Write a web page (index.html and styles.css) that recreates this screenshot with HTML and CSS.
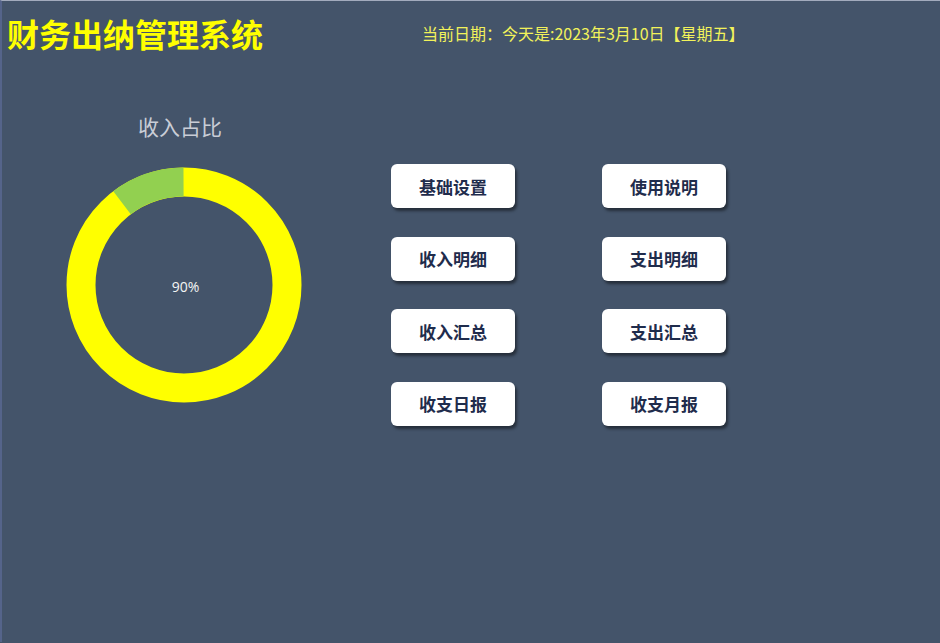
FILE: index.html
```html
<!DOCTYPE html>
<html lang="zh-CN">

<head>
    <meta charset="utf-8">
    <title>财务出纳管理系统</title>
    <link rel="stylesheet" href="styles.css">
</head>

<body>
    <div class="page">
        <div class="header">
            <h1 class="title">财务出纳管理系统</h1>
            <div class="date">当前日期：今天是:2023年3月10日【星期五】</div>
        </div>

        <div class="main">
            <div class="chart">
                <div class="chart-title">收入占比</div>
                <div class="donut">
                    <svg width="240" height="240" viewBox="0 0 240 240">
                        <circle cx="120" cy="120" r="103" fill="none" stroke="#ffff00" stroke-width="29"></circle>
                        <!-- 支出部分 10% -->
                        <circle cx="120" cy="120" r="103" fill="none" stroke="#92d050" stroke-width="29"
                            stroke-dasharray="66 600" transform="rotate(-127 120 120)"></circle>
                    </svg>
                    <span class="donut-label">90%</span>
                </div>
            </div>

            <div class="menu">
                <button class="menu-btn">基础设置</button>
                <button class="menu-btn">使用说明</button>
                <button class="menu-btn">收入明细</button>
                <button class="menu-btn">支出明细</button>
                <button class="menu-btn">收入汇总</button>
                <button class="menu-btn">支出汇总</button>
                <button class="menu-btn">收支日报</button>
                <button class="menu-btn">收支月报</button>
            </div>
        </div>
    </div>
</body>

</html>
```

FILE: styles.css
```css
:root {
    --bg-color: #44546a;
    --title-color: #ffff00;
    --btn-text: #1f2c4c;
}

body {
    margin: 0;
    font-family: "Noto Sans CJK SC", "Noto Sans", sans-serif;
    background: var(--bg-color);
}

.page {
    height: 642px;
    border-top: 1px solid #a3abbd;
    border-left: 2px solid #55648a;
    box-sizing: border-box;
}

.header {
    display: flex;
    align-items: center;
    padding: 15px 0 0 5px;
    height: 34px;
}

.title {
    margin: 0;
    font-size: 32px;
    line-height: 34px;
    font-weight: bold;
    color: var(--title-color);
}

.date {
    margin-left: 159px;
    font-size: 16px;
    color: #f2f25a;
}

.main {
    display: flex;
    padding-left: 62px;
}

.chart {
    width: 240px;
}

.chart-title {
    margin-top: 66px;
    text-align: center;
    font-size: 21px;
    line-height: 21px;
    color: #c9cdd6;
    padding-right: 8px;
}

.donut {
    position: relative;
    width: 240px;
    height: 240px;
    margin-top: 28px;
}

.donut svg {
    display: block;
}

.donut-label {
    position: absolute;
    left: 0;
    right: 0;
    top: 112px;
    text-align: center;
    font-family: "Open Sans", "Noto Sans", sans-serif;
    font-size: 14px;
    color: #f4f4f4;
    padding-left: 3px;
}

.menu {
    display: grid;
    grid-template-columns: 124px 124px;
    grid-auto-rows: 44px;
    column-gap: 87px;
    row-gap: 28.5px;
    margin-top: 114px;
    margin-left: 87px;
}

.menu-btn {
    background: #fff;
    border: none;
    border-radius: 6px;
    box-shadow: 2px 3px 3px rgba(0, 0, 0, 0.45);
    font-family: inherit;
    font-size: 17px;
    font-weight: bold;
    color: var(--btn-text);
    cursor: pointer;
}
```
